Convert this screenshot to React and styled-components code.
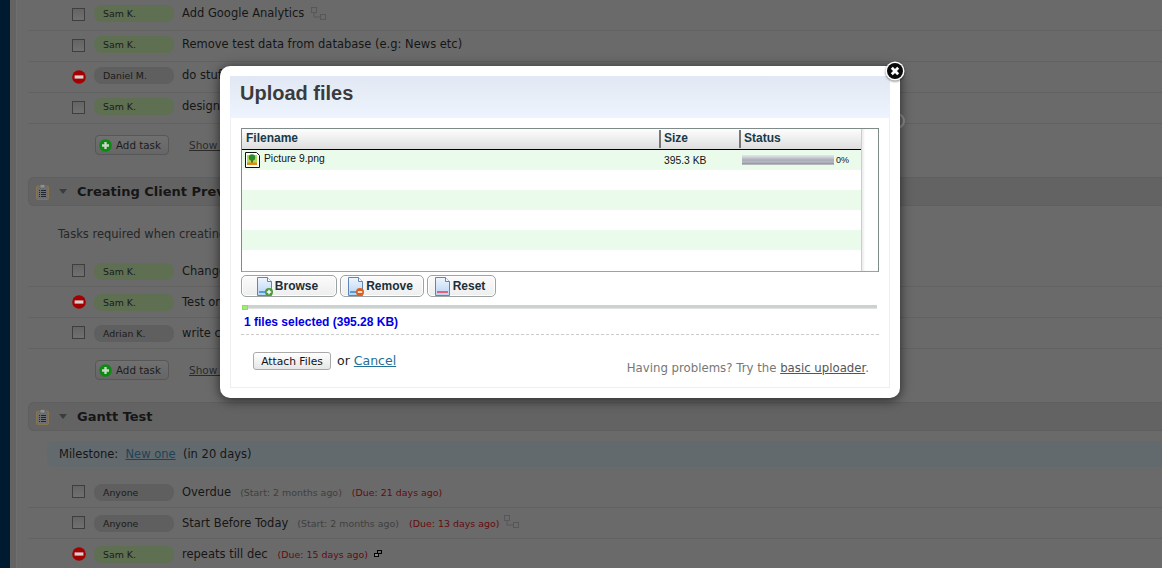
import React from "react";
import styled, { createGlobalStyle } from "styled-components";

const Global = createGlobalStyle`
  html, body { margin: 0; padding: 0; height: 100%; overflow: hidden; background: #6a6a6a; }
  #root { height: 100%; }
  * { box-sizing: border-box; }
`;

const Shell = styled.div`
  display: flex; height: 568px; overflow: hidden; position: relative;
  font-family: "DejaVu Sans", sans-serif; color: #161616; font-size: 11.5px;
`;
const Sidebar = styled.div`width: 10px; flex: none; background: #001a30;`;
const Strip = styled.div`width: 7px; flex: none; background: #646464; border-right: 1px solid #6f6f6f;`;
const Main = styled.main`flex: 1; min-width: 0; padding-left: 11px;`;

const TaskList = styled.div``;
const Row = styled.div`
  height: 31px; display: flex; align-items: flex-start;
  padding: ${p => p.$top}px 0 0 44px; border-bottom: 1px solid #626262;
`;
const Box = styled.span`
  width: 13px; height: 13px; flex: none; margin-top: ${p => 8 - p.$top}px;
  border: 1px solid #3e3e3e; background: linear-gradient(#646464, #707070);
`;
const StopWrap = styled.span`
  width: 13px; height: 13px; flex: none; margin-top: ${p => 8 - p.$top}px; display: block; line-height: 0;
`;
const Pill = styled.span`
  width: 80px; height: 17px; flex: none; margin-left: 9px; border-radius: 8px;
  background: ${p => (p.$green ? "#5f7052" : "#5f5f5f")};
  padding-left: 9px; font-size: 9.4px; line-height: 17px; color: #1a1a1a;
`;
const Title = styled.span`margin-left: 8px; line-height: 16px; white-space: nowrap;`;
const Meta = styled.span`
  margin-left: ${p => (p.$due ? 10 : 9)}px; font-size: 9.45px; line-height: 17px; white-space: nowrap;
  color: ${p => (p.$due ? "#640a10" : "#3f3f3f")};
`;
const TinyIcon = styled.svg`flex: none; margin-left: ${p => p.$gap}px; margin-top: ${p => p.$mt}px;`;
const Ring = styled.span`
  width: 16px; height: 16px; flex: none; margin: 15px 257px 0 auto; border-radius: 50%;
  border: 2px solid #8e8e8e;
`;

const Actions = styled.div`
  display: flex; align-items: center; margin: 11px 0 22px 67px; height: 20px;
`;
const AddTask = styled.span`
  width: 74px; height: 20px; display: flex; align-items: center; gap: 4px; padding-left: 3px;
  border: 1px solid #575757; border-radius: 4px; background: linear-gradient(#707070, #666);
  font-size: 10.3px; color: #1c1c1c; white-space: nowrap;
`;
const ShowLink = styled.span`
  margin-left: 20px; font-size: 10.5px; color: #2b2b2b; text-decoration: underline; white-space: nowrap;
`;

const SectionBar = styled.div`
  height: 29px; display: flex; align-items: center; background: #636363;
  border: 1px solid #5f5f5f; border-right: 0; border-radius: 6px 0 0 6px; padding-left: 7px;
`;
const Caret = styled.span`
  width: 0; height: 0; margin-left: 10px; border: 4px solid transparent; border-top: 5px solid #3c3c3c; border-bottom: 0;
`;
const SectionTitle = styled.h2`
  margin: 0 0 0 10px; font-size: 13px; font-weight: 700; color: #161616; white-space: nowrap;
`;
const Desc = styled.p`margin: 21px 0 15px 30px; line-height: 14px; color: #262626; white-space: nowrap;`;
const Milestone = styled.div`
  height: 26px; margin: 10px 0 10px 19px; padding-left: 12px; display: flex; align-items: center;
  background: #636a6e; border-radius: 6px 0 0 6px; white-space: pre;
`;
const DarkLink = styled.span`color: #1f4356; text-decoration: underline;`;

const Modal = styled.div`
  position: absolute; left: 220px; top: 66px; width: 680px; height: 332px; padding: 10px;
  background: #fff; border-radius: 10px; box-shadow: 0 2px 12px rgba(0,0,0,.65);
  font-family: "Liberation Sans", Arial, sans-serif;
`;
const Close = styled.svg`position: absolute; right: -5px; top: -5px; filter: drop-shadow(0 1px 1px rgba(0,0,0,.5));`;
const Inner = styled.div`height: 312px; border: 1px solid #eee; border-top: 0; display: flex; flex-direction: column;`;
const ModalHead = styled.div`
  height: 42px; margin: 0 -1px; background: linear-gradient(#e2e8f3, #eef4fd);
  padding: 6px 0 0 10px;
`;
const ModalTitle = styled.h1`margin: 0; font-size: 20px; line-height: 23px; font-weight: 700; color: #393b3e;`;
const Body = styled.div`padding: 10px 10px 0 10px; flex: 1; display: flex; flex-direction: column;`;

const FileBox = styled.div`
  width: 638px; height: 144px; flex: none; border: 1px solid #7f8b89; border-bottom-color: #9aa3a1;
  display: flex; background: #fff;
`;
const ListPane = styled.div`width: 619px; flex: none;`;
const ScrollTrack = styled.div`flex: 1; border-left: 1px solid #ccc; box-shadow: inset 2px 0 2px #eee;`;
const HeadRow = styled.div`
  height: 21px; display: grid; grid-template-columns: 417px 80px 1fr;
  border-bottom: 1px solid #000; background: linear-gradient(#fdfdfd, #dedede);
`;
const HeadCell = styled.div`
  font-size: 12px; font-weight: 700; color: #17394b; line-height: 16px;
  border-left: ${p => (p.$sep ? "2px solid #777" : "0")}; margin: 1px 0; padding-left: ${p => (p.$sep ? 3 : 4)}px;
`;
const FileRow = styled.div`
  height: 20px; display: grid; grid-template-columns: 417px 80px 1fr; align-items: center;
  background: ${p => (p.$alt ? "#ebfbeb" : "#fff")};
  font-size: 10.3px; color: #111;
`;
const NameCell = styled.div`display: flex; align-items: center; gap: 4px; padding-left: 3px;`;
const RaisedText = styled.span`padding-bottom: 3px;`;
const SizeCell = styled.div`padding-left: 5px;`;
const StatusCell = styled.div`display: flex; align-items: center; gap: 2px; padding-left: 3px; font-size: 9px;`;
const Bar = styled.div`
  width: 92px; height: 10px;
  background: linear-gradient(#e4e8e8 0, #d0d3d8 20%, #a9acb6 50%, #b8bbc4 70%, #8f929c 90%, #d8dcdc 100%);
`;

const ButtonRow = styled.div`display: flex; margin-top: 3px; gap: 3px;`;
const FlashButton = styled.div`
  width: ${p => p.$w}px; height: 22px; display: flex; align-items: center; justify-content: center; gap: 2px;
  padding-right: 3px;
  border: 1px solid #9ca3a3; border-radius: 5px; background: linear-gradient(#fbfbfb, #eeeeee);
  box-shadow: inset 0 0 0 1px #fff;
  font-size: 12px; font-weight: 700; color: #1c2f38;
`;
const Track = styled.div`
  position: relative; width: 635px; height: 4px; margin: 8px 0 0 1px; background: #ccd2d0; border-bottom: 1px solid #dfe3e2;
`;
const TrackFill = styled.div`
  position: absolute; left: 0; top: 0; width: 6px; height: 5px; background: #a6e878; border: 1px solid #8ede5c;
`;
const Selected = styled.div`margin: 6px 0 0 3px; font-size: 12px; line-height: 14px; font-weight: 700; color: #0000e6;`;
const Dashed = styled.div`margin-top: 5px; width: 638px; border-top: 1px dashed #ccc;`;
const Footer = styled.div`
  display: flex; align-items: flex-start; margin-top: 17px; padding-left: 12px; width: 628px;
  font-family: "DejaVu Sans", sans-serif;
`;
const Attach = styled.span`
  width: 78px; height: 18px; border: 1px solid #aaa; border-radius: 3px; background: linear-gradient(#fff, #e6e6e6);
  font-size: 10.7px; line-height: 18px; text-align: center; color: #111; white-space: nowrap;
`;
const Or = styled.span`margin: 1px 0 0 6px; font-size: 12.5px; line-height: 16px; color: #222;`;
const Cancel = styled.span`margin: 1px 0 0 4px; font-size: 12.5px; line-height: 16px; color: #236f96; text-decoration: underline;`;
const Hint = styled.span`margin: 9px 0 0 auto; font-size: 11.74px; line-height: 14px; color: #777; white-space: nowrap;`;
const HintLink = styled.span`color: #555; text-decoration: underline;`;

const Stop = ({ top }) => (
  <StopWrap $top={top}>
    <svg width="14" height="14" viewBox="0 0 14 14">
      <circle cx="7" cy="7" r="6.8" fill="#a30000" />
      <rect x="2.6" y="5.4" width="8.8" height="3.2" fill="#d8d0d0" />
    </svg>
  </StopWrap>
);
const Dep = ({ gap, mt }) => (
  <TinyIcon $gap={gap} $mt={mt} width="16" height="15" viewBox="0 0 16 15" fill="none" stroke="#575757">
    <rect x="0.5" y="1.5" width="5" height="5" />
    <rect x="9.5" y="8.5" width="5" height="5" />
    <path d="M3 7v4h6" />
  </TinyIcon>
);
const Repeat = () => (
  <TinyIcon $gap={6} $mt={4} width="8" height="8" viewBox="0 0 8 8" fill="none" stroke="#000">
    <rect x="3.5" y="0.5" width="4" height="3" />
    <rect x="0.5" y="3.5" width="4" height="3" fill="#888" />
  </TinyIcon>
);
const Plus = () => (
  <svg width="13" height="13" viewBox="0 0 13 13">
    <circle cx="6.5" cy="6.5" r="6.3" fill="#0d8a12" />
    <path d="M6.5 3v7M3 6.5h7" stroke="#c9d8c6" strokeWidth="2.4" />
  </svg>
);
const ClipSvg = styled.svg`flex: none;`;
const Clipboard = () => (
  <ClipSvg width="13" height="16" viewBox="0 0 13 16">
    <rect x="0.5" y="2" width="12" height="13.5" rx="1" fill="#6e6f72" stroke="#86744f" />
    <rect x="4" y="0.5" width="5" height="3.5" rx="1" fill="#909090" stroke="#5c5c5c" strokeWidth="0.6" />
    <path d="M3 6.5h1M5 6.5h5M3 8.5h1M5 8.5h5M3 10.5h1M5 10.5h5M3 12.5h1M5 12.5h5" stroke="#22252b" />
  </ClipSvg>
);
const FileThumb = () => (
  <svg width="15" height="16" viewBox="0 0 15 16">
    <path d="M.5.5h11l3 3v12H.5z" fill="#fff" stroke="#111" />
    <rect x="2" y="3" width="10" height="10" fill="#a9dd5a" />
    <path d="M7 6v5" stroke="#6b3b12" strokeWidth="1.5" />
    <circle cx="7" cy="5.5" r="3.2" fill="#2e8a2a" />
    <rect x="2" y="10.5" width="10" height="2.5" fill="#e08a1a" />
  </svg>
);
const DocIcon = ({ kind }) => {
  const id = `doc-${kind}`;
  const band = kind === "reset" ? "#e2607a" : "#5b9bd8";
  return (
    <svg width="16" height="19" viewBox="0 0 16 19">
      <defs>
        <linearGradient id={id} x1="0" y1="0" x2="0" y2="1">
          <stop offset="0" stopColor="#f0f6ff" />
          <stop offset="1" stopColor="#b7d2f4" />
        </linearGradient>
      </defs>
      <path d="M.5.5h10l4 4v14H.5z" fill={`url(#${id})`} stroke="#5e86b8" />
      <path d="M10.5.5v4h4" fill="#fff" stroke="#5e86b8" />
      <rect x="2" y="14" width="11" height="2" fill={band} />
      {kind === "add" && <g><circle cx="12" cy="15" r="4" fill="#4c9a3c" /><path d="M12 12.8v4.4M9.8 15h4.4" stroke="#fff" strokeWidth="1.4" /></g>}
      {kind === "remove" && <g><circle cx="12" cy="15" r="4" fill="#dd5f1c" /><path d="M9.8 15h4.4" stroke="#fff" strokeWidth="1.6" /></g>}
    </svg>
  );
};

const Task = ({ top, stop, who, green, text, start, due, children }) => (
  <Row $top={top}>
    {stop ? <Stop top={top} /> : <Box $top={top} />}
    <Pill $green={green}>{who}</Pill>
    <Title>{text}</Title>
    {start && <Meta>(Start: {start})</Meta>}
    {due && <Meta $due>(Due: {due})</Meta>}
    {children}
  </Row>
);

const Actionbar = () => (
  <Actions>
    <AddTask><Plus />Add task</AddTask>
    <ShowLink>Show c</ShowLink>
  </Actions>
);

const Section = ({ title }) => (
  <SectionBar>
    <Clipboard />
    <Caret />
    <SectionTitle>{title}</SectionTitle>
  </SectionBar>
);

export default function App() {
  return (
    <Shell>
      <Global />
      <Sidebar />
      <Strip />
      <Main>
        <TaskList>
          <Task top={5} who="Sam K." green text="Add Google Analytics"><Dep gap={7} mt={1} /></Task>
          <Task top={5} who="Sam K." green text="Remove test data from database (e.g: News etc)" />
          <Task top={5} stop who="Daniel M." text="do stuff" />
          <Task top={5} who="Sam K." green text="design"><Ring /></Task>
        </TaskList>
        <Actionbar />
        <Section title="Creating Client Preview" />
        <Desc>Tasks required when creating client previews</Desc>
        <TaskList>
          <Task top={7} who="Sam K." green text="Change" />
          <Task top={7} stop who="Sam K." green text="Test on" />
          <Task top={7} who="Adrian K." text="write copy" />
        </TaskList>
        <Actionbar />
        <Section title="Gantt Test" />
        <Milestone>Milestone:  <DarkLink>New one</DarkLink>  (in 20 days)</Milestone>
        <TaskList>
          <Task top={7} who="Anyone" text="Overdue" start="2 months ago" due="21 days ago" />
          <Task top={7} who="Anyone" text="Start Before Today" start="2 months ago" due="13 days ago"><Dep gap={5} mt={-1} /></Task>
          <Task top={7} stop who="Sam K." green text="repeats till dec" due="15 days ago"><Repeat /></Task>
        </TaskList>
      </Main>

      <Modal>
        <Close width="20" height="20" viewBox="0 0 20 20">
          <circle cx="10" cy="10" r="9.5" fill="#fff" />
          <circle cx="10" cy="10" r="8" fill="#0a0a0a" />
          <path d="M6.8 6.8l6.4 6.4M13.2 6.8l-6.4 6.4" stroke="#fff" strokeWidth="2.8" />
        </Close>
        <Inner>
          <ModalHead><ModalTitle>Upload files</ModalTitle></ModalHead>
          <Body>
            <FileBox>
              <ListPane>
                <HeadRow>
                  <HeadCell>Filename</HeadCell>
                  <HeadCell $sep>Size</HeadCell>
                  <HeadCell $sep>Status</HeadCell>
                </HeadRow>
                <FileRow $alt>
                  <NameCell><FileThumb /><RaisedText>Picture 9.png</RaisedText></NameCell>
                  <SizeCell><RaisedText>395.3 KB</RaisedText></SizeCell>
                  <StatusCell><Bar />0%</StatusCell>
                </FileRow>
                <FileRow />
                <FileRow $alt />
                <FileRow />
                <FileRow $alt />
                <FileRow />
              </ListPane>
              <ScrollTrack />
            </FileBox>
            <ButtonRow>
              <FlashButton $w={96}><DocIcon kind="add" />Browse</FlashButton>
              <FlashButton $w={84}><DocIcon kind="remove" />Remove</FlashButton>
              <FlashButton $w={69}><DocIcon kind="reset" />Reset</FlashButton>
            </ButtonRow>
            <Track><TrackFill /></Track>
            <Selected>1 files selected (395.28 KB)</Selected>
            <Dashed />
            <Footer>
              <Attach>Attach Files</Attach>
              <Or>or</Or>
              <Cancel>Cancel</Cancel>
              <Hint>Having problems? Try the <HintLink>basic uploader</HintLink>.</Hint>
            </Footer>
          </Body>
        </Inner>
      </Modal>
    </Shell>
  );
}
